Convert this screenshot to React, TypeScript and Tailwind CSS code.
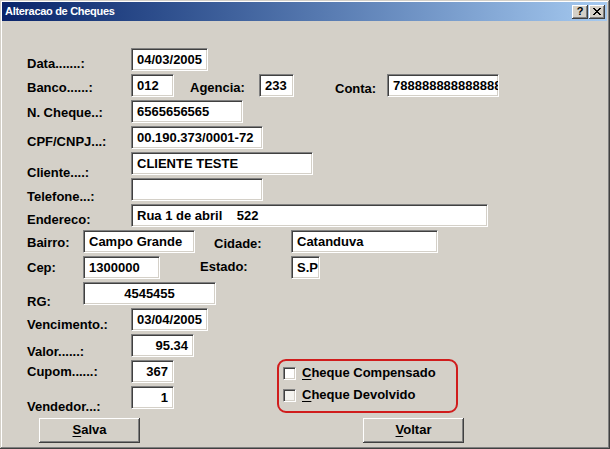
import React from "react";

const font = "font-['Liberation_Sans',Arial,sans-serif]";

interface EditProps {
  w: string;
  value?: string;
  align?: "left" | "right" | "center";
}

function Edit({ w, value = "", align = "left" }: EditProps) {
  const justify = align === "right" ? "justify-end pr-[5px]" : align === "center" ? "justify-center" : "justify-start pl-[5px]";
  return (
    <div
      className={`${w} ${justify} flex h-[23px] shrink-0 items-center overflow-hidden whitespace-nowrap border border-t-[#808080] border-l-[#808080] border-b-white border-r-white bg-white text-[13px] leading-[15px] font-bold text-black shadow-[inset_1px_1px_0_#404040,inset_-1px_-1px_0_#d4d0c8]`}
    >
      {value}
    </div>
  );
}

function Label({ w, mt, children }: { w: string; mt: string; children: React.ReactNode }) {
  return <span className={`${w} ${mt} shrink-0 whitespace-nowrap text-[13px] leading-[15px] font-bold text-black`}>{children}</span>;
}

function Check({ label, gray }: { label: string; gray?: boolean }) {
  return (
    <div className="flex h-[26px] items-start gap-[6px]">
      <span
        className={`h-[13px] w-[13px] shrink-0 border border-t-[#808080] border-l-[#808080] border-b-white border-r-white shadow-[inset_1px_1px_0_#404040,inset_-1px_-1px_0_#d4d0c8] ${gray ? "bg-[#f4f3ef]" : "bg-white"}`}
      />
      <span className="mt-[-2px] text-[13px] leading-[15px] font-bold text-black">
        <span className="underline underline-offset-2">{label.charAt(0)}</span>
        {label.slice(1)}
      </span>
    </div>
  );
}

function Button({ label, className }: { label: string; className: string }) {
  return (
    <button
      type="button"
      className={`${className} flex h-[25px] w-[101px] items-center justify-center bg-[#d4d0c8] pb-[2px] text-[13px] leading-[15px] font-bold text-black shadow-[inset_-1px_-1px_0_#404040,inset_1px_1px_0_#ffffff,inset_-2px_-2px_0_#808080,inset_2px_2px_0_#d4d0c8]`}
    >
      <span>
        <span className="underline underline-offset-2">{label.charAt(0)}</span>
        {label.slice(1)}
      </span>
    </button>
  );
}

export default function App() {
  return (
    <div className={`${font} h-[449px] w-[610px] overflow-hidden bg-[#d4d0c8]`}>
      <div className="flex h-full w-full flex-col pt-[2px] pr-[3px] pb-[3px] pl-[2px] shadow-[inset_-1px_-1px_0_#404040,inset_1px_1px_0_#d4d0c8,inset_-2px_-2px_0_#808080,inset_2px_2px_0_#ffffff]">
        {/* barra de titulo */}
        <div className="flex h-[19px] shrink-0 items-center justify-between bg-linear-to-r from-[#0a246a] to-[#a6caf0] pr-[2px] pl-[3px]">
          <span className="text-[11px] leading-[13px] font-bold tracking-[-0.3px] text-white">Alteracao de Cheques</span>
          <div className="flex gap-[1px]">
            <div className="flex h-[14px] w-[16px] items-center justify-center bg-[#d4d0c8] text-[11px] leading-[11px] font-bold text-black shadow-[inset_-1px_-1px_0_#404040,inset_1px_1px_0_#ffffff,inset_-2px_-2px_0_#808080]">
              ?
            </div>
            <div className="flex h-[14px] w-[16px] items-center justify-center bg-[#d4d0c8] shadow-[inset_-1px_-1px_0_#404040,inset_1px_1px_0_#ffffff,inset_-2px_-2px_0_#808080]">
              <svg width="8" height="7" viewBox="0 0 8 7" shapeRendering="crispEdges">
                <path d="M0 0h2v1H0zM6 0h2v1H6zM1 1h2v1H1zM5 1h2v1H5zM2 2h4v1H2zM3 3h2v1H3zM2 4h4v1H2zM1 5h2v1H1zM5 5h2v1H5zM0 6h2v1H0zM6 6h2v1H6z" fill="#000" />
              </svg>
            </div>
          </div>
        </div>

        {/* formulario */}
        <div className="flex flex-col pt-[27px] pl-[25px]">
          <div className="flex h-[26px] items-start">
            <Label w="w-[104px]" mt="mt-[8px]">Data.......:</Label>
            <Edit w="w-[77px]" value="04/03/2005" />
          </div>
          <div className="flex h-[26px] items-start">
            <Label w="w-[104px]" mt="mt-[6px]">Banco......:</Label>
            <Edit w="w-[43px]" value="012" />
            <Label w="w-[69px] ml-[16px]" mt="mt-[6px]">Agencia:</Label>
            <Edit w="w-[35px]" value="233" />
            <Label w="w-[52px] ml-[41px]" mt="mt-[7px]">Conta:</Label>
            <Edit w="w-[112px]" value="78888888888888888" />
          </div>
          <div className="flex h-[26px] items-start">
            <Label w="w-[104px]" mt="mt-[5px]">N. Cheque..:</Label>
            <Edit w="w-[112px]" value="6565656565" />
          </div>
          <div className="flex h-[26px] items-start">
            <Label w="w-[104px]" mt="mt-[8px]">CPF/CNPJ...:</Label>
            <Edit w="w-[132px]" value="00.190.373/0001-72" />
          </div>
          <div className="flex h-[26px] items-start">
            <Label w="w-[104px]" mt="mt-[13px]">Cliente....:</Label>
            <Edit w="w-[182px]" value="CLIENTE TESTE" />
          </div>
          <div className="flex h-[26px] items-start">
            <Label w="w-[104px]" mt="mt-[11px]">Telefone...:</Label>
            <Edit w="w-[132px]" />
          </div>
          <div className="flex h-[26px] items-start">
            <Label w="w-[104px]" mt="mt-[8px]">Endereco:</Label>
            <Edit w="w-[357px]" value={"Rua 1 de abril\u00a0\u00a0\u00a0\u00a0522"} />
          </div>
          <div className="flex h-[26px] items-start">
            <Label w="w-[56px]" mt="mt-[5px]">Bairro:</Label>
            <Edit w="w-[112px]" value="Campo Grande" />
            <Label w="w-[77px] ml-[19px]" mt="mt-[6px]">Cidade:</Label>
            <Edit w="w-[147px]" value="Catanduva" />
          </div>
          <div className="flex h-[26px] items-start">
            <Label w="w-[56px]" mt="mt-[4px]">Cep:</Label>
            <Edit w="w-[77px]" value="1300000" />
            <Label w="w-[91px] ml-[40px]" mt="mt-[3px]">Estado:</Label>
            <Edit w="w-[29px]" value="S.P" />
          </div>
          <div className="flex h-[26px] items-start">
            <Label w="w-[56px]" mt="mt-[12px]">RG:</Label>
            <Edit w="w-[133px]" value="4545455" align="center" />
          </div>
          <div className="flex h-[26px] items-start">
            <Label w="w-[104px]" mt="mt-[9px]">Vencimento.:</Label>
            <Edit w="w-[77px]" value="03/04/2005" />
          </div>
          <div className="flex h-[26px] items-start">
            <Label w="w-[104px]" mt="mt-[10px]">Valor......:</Label>
            <Edit w="w-[63px]" value="95.34" align="right" />
          </div>

          <div className="flex h-[52px] items-start">
            <div className="flex w-[150px] flex-col">
              <div className="flex h-[26px] items-start">
                <Label w="w-[104px]" mt="mt-[4px]">Cupom......:</Label>
                <Edit w="w-[43px]" value="367" align="right" />
              </div>
              <div className="flex h-[26px] items-start">
                <Label w="w-[104px]" mt="mt-[13px]">Vendedor...:</Label>
                <Edit w="w-[43px]" value="1" align="right" />
              </div>
            </div>
            <div className="ml-[100px] -mt-px flex h-[54px] w-[181px] shrink-0 flex-col rounded-[9px] border-2 border-[#d01c1c] pt-[6px] pl-[4px]">
              <Check label="Cheque Compensado" />
              <Check label="Cheque Devolvido" gray />
            </div>
          </div>

          <div className="mt-[6px] flex">
            <Button label="Salva" className="ml-[12px]" />
            <Button label="Voltar" className="ml-[223px]" />
          </div>
        </div>
      </div>
    </div>
  );
}
